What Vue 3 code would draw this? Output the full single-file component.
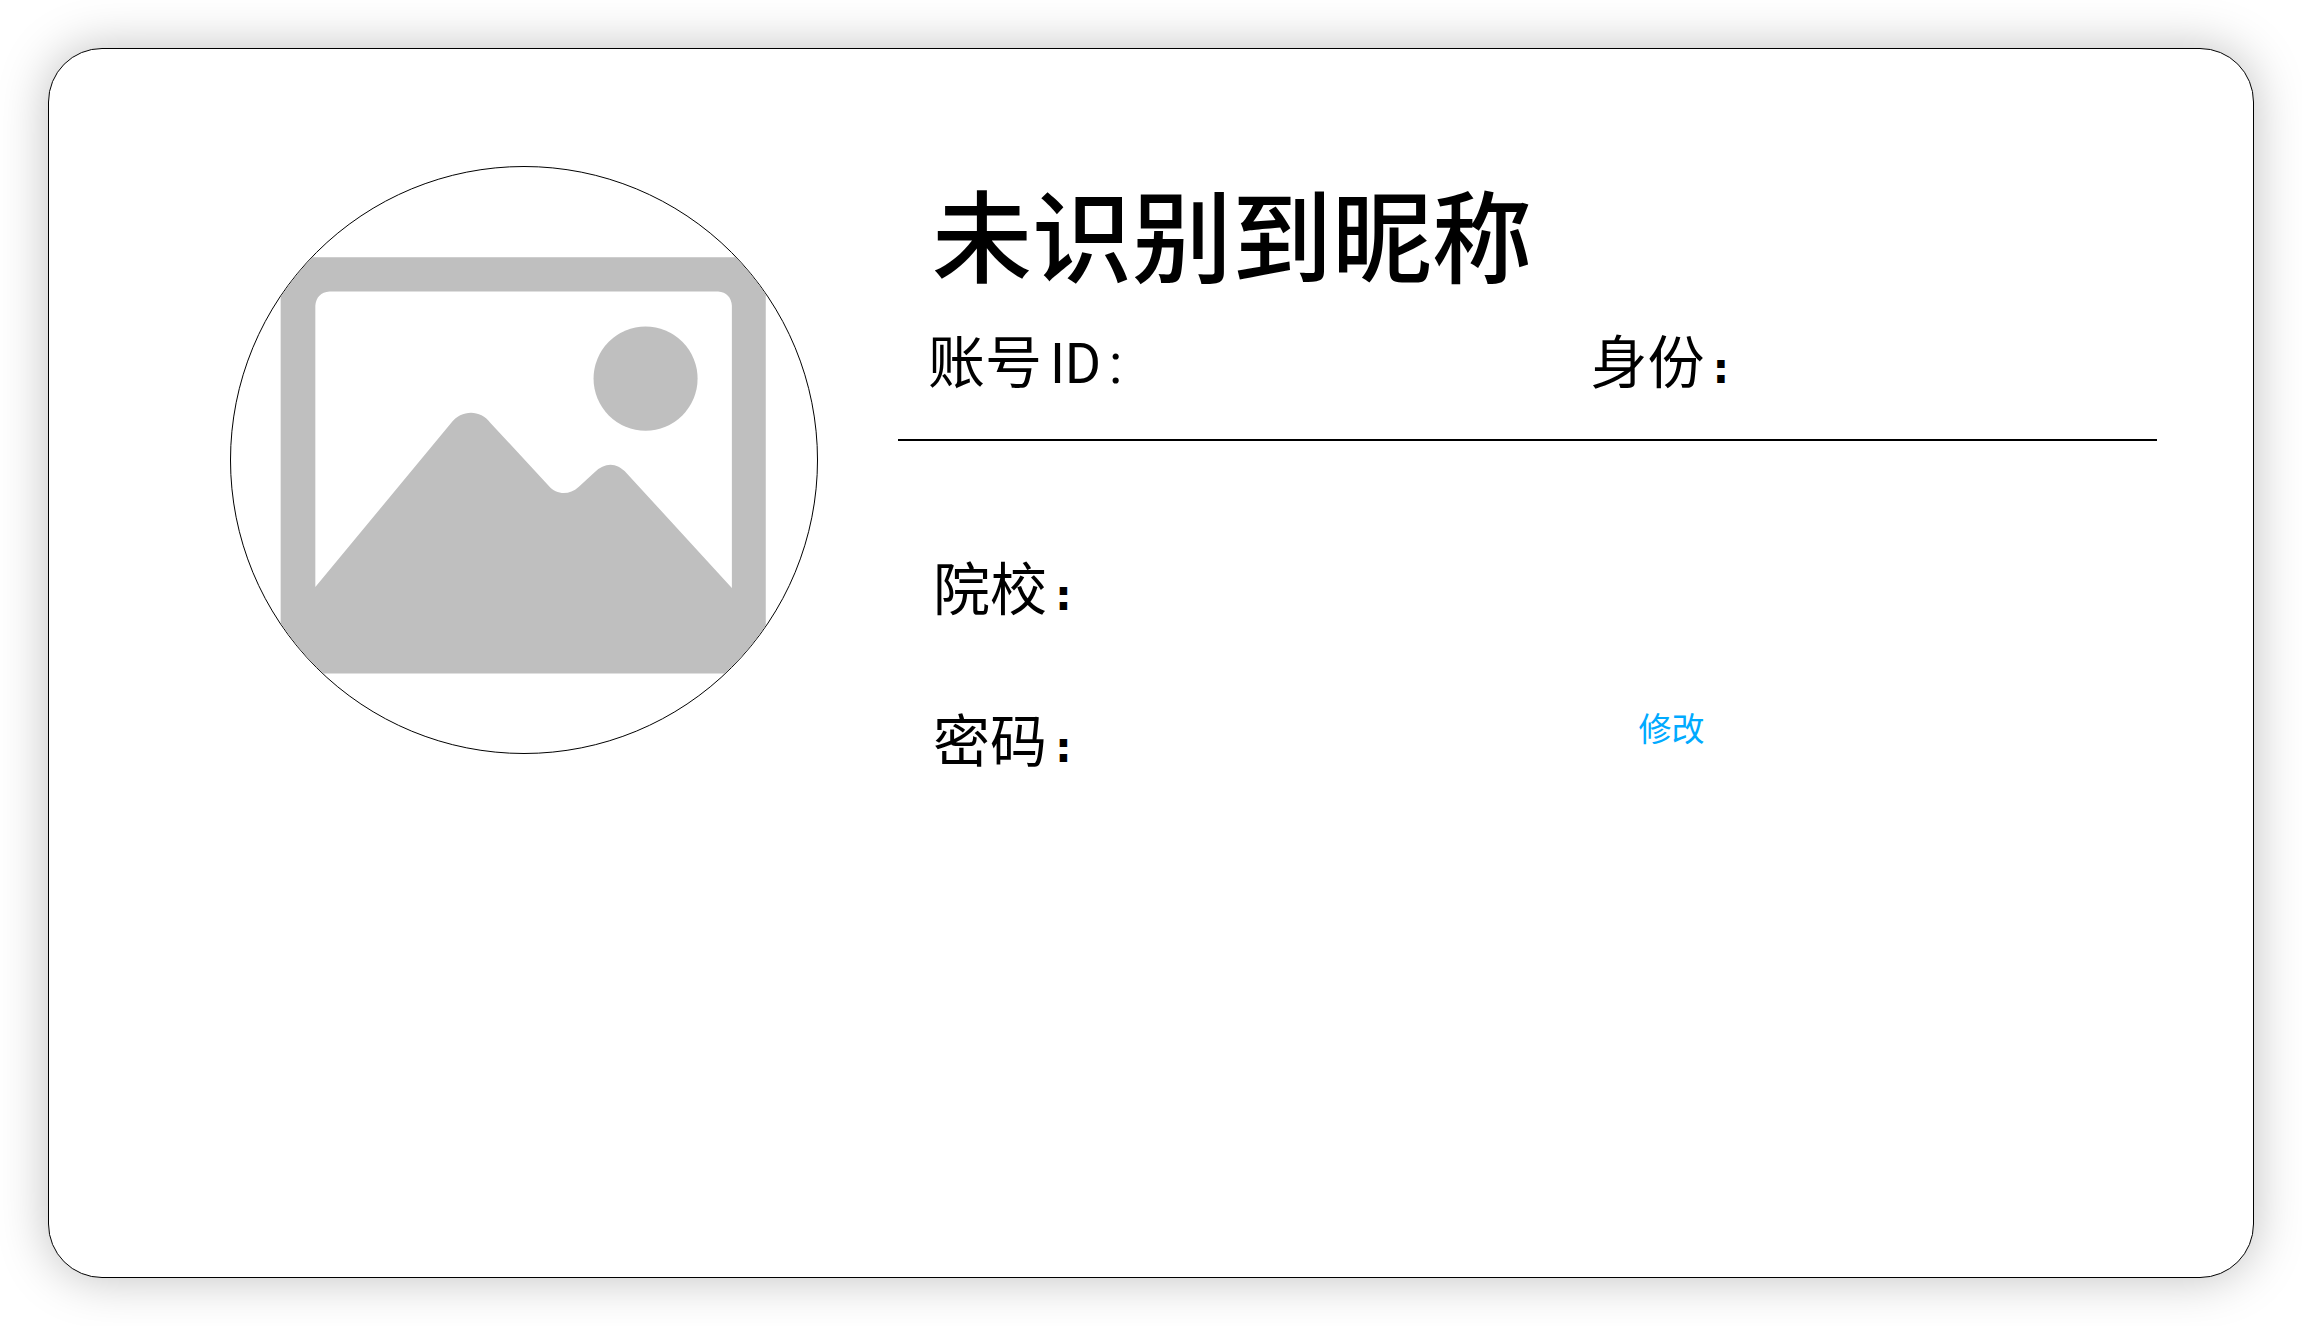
<script setup>
import { ref } from 'vue'

const profile = ref({
  nickname: '未识别到昵称',
  id: '',
  role: '',
  school: '',
  password: ''
})
</script>

<template>
  <main class="page">
    <section class="card">
      <div class="avatar">
        <svg viewBox="26 40 1487 1487" role="img" aria-label="头像">
          <path
            fill="#bfbfbf"
            fill-rule="evenodd"
            d="M152 269H1383V1325H152Z M240 1106L584 690C612 655 658 655 685 690L832 849C852 872 884 874 908 852L948 815C975 790 1003 788 1030 817L1297 1108V392Q1294 359 1262 356H276Q243 359 240 392Z"
          />
          <circle cx="1078" cy="577" r="132" fill="#bfbfbf" />
        </svg>
      </div>
      <div class="info">
        <h1 class="nickname">{{ profile.nickname }}</h1>
        <div class="row account">
          <p class="field">账号<span class="latin">ID</span><span class="latin">:</span><span>{{ profile.id }}</span></p>
          <p class="field">身份<b class="colon">:</b><span>{{ profile.role }}</span></p>
        </div>
        <hr class="divider" />
        <div class="row school">
          <p class="field">院校<b class="colon">:</b><span>{{ profile.school }}</span></p>
        </div>
        <div class="row password">
          <p class="field">密码<b class="colon">:</b><span>{{ profile.password }}</span></p>
          <button class="edit" type="button">修改</button>
        </div>
      </div>
    </section>
  </main>
</template>

<style>
body {
  margin: 0;
  background: #fff;
}
</style>

<style scoped>
.page {
  box-sizing: border-box;
  min-height: 100vh;
  padding: 48px;
  display: flex;
  color: #000;
  font-family: "Noto Sans CJK SC", sans-serif;
}

.card {
  box-sizing: border-box;
  flex: 1;
  display: flex;
  align-items: flex-start;
  gap: 80px;
  padding: 117px 96px 96px 181px;
  border: 1px solid #000;
  border-radius: 54px;
  background: #fff;
  box-shadow: 0 0 50px rgba(0, 0, 0, 0.25);
}

.avatar {
  box-sizing: border-box;
  flex: none;
  width: 588px;
  height: 588px;
  border: 1px solid #000;
  border-radius: 50%;
  overflow: hidden;
}

.avatar svg {
  display: block;
  width: 100%;
  height: 100%;
}

.info {
  flex: 1;
  min-width: 0;
  padding-top: 16px;
}

.nickname {
  margin: 0 0 46px;
  padding-left: 34px;
  font-size: 100px;
  line-height: 100px;
  font-weight: 500;
}

.row {
  display: grid;
  grid-template-columns: 11fr 9fr;
  align-items: start;
}

.field {
  height: 60px;
  margin: 0;
  font-size: 57px;
  line-height: 60px;
}

.field:first-child {
  padding-left: 35px;
}

.account .field:first-child {
  padding-left: 30px;
}

.latin {
  margin-left: 8px;
  font-family: Roboto, sans-serif;
  font-size: 55px;
  line-height: 1;
}

.colon {
  margin-left: 8px;
  font-family: "DejaVu Sans", sans-serif;
  font-size: 42px;
  line-height: 1;
}

.divider {
  height: 2px;
  margin: 51px 0 114px;
  border: 0;
  background: #000;
}

.school {
  margin-bottom: 92px;
}

.edit {
  justify-self: start;
  margin: 0 0 0 48px;
  padding: 0;
  border: 0;
  background: none;
  color: #00aaff;
  font-family: inherit;
  font-size: 33px;
  line-height: 40px;
  cursor: pointer;
}
</style>
